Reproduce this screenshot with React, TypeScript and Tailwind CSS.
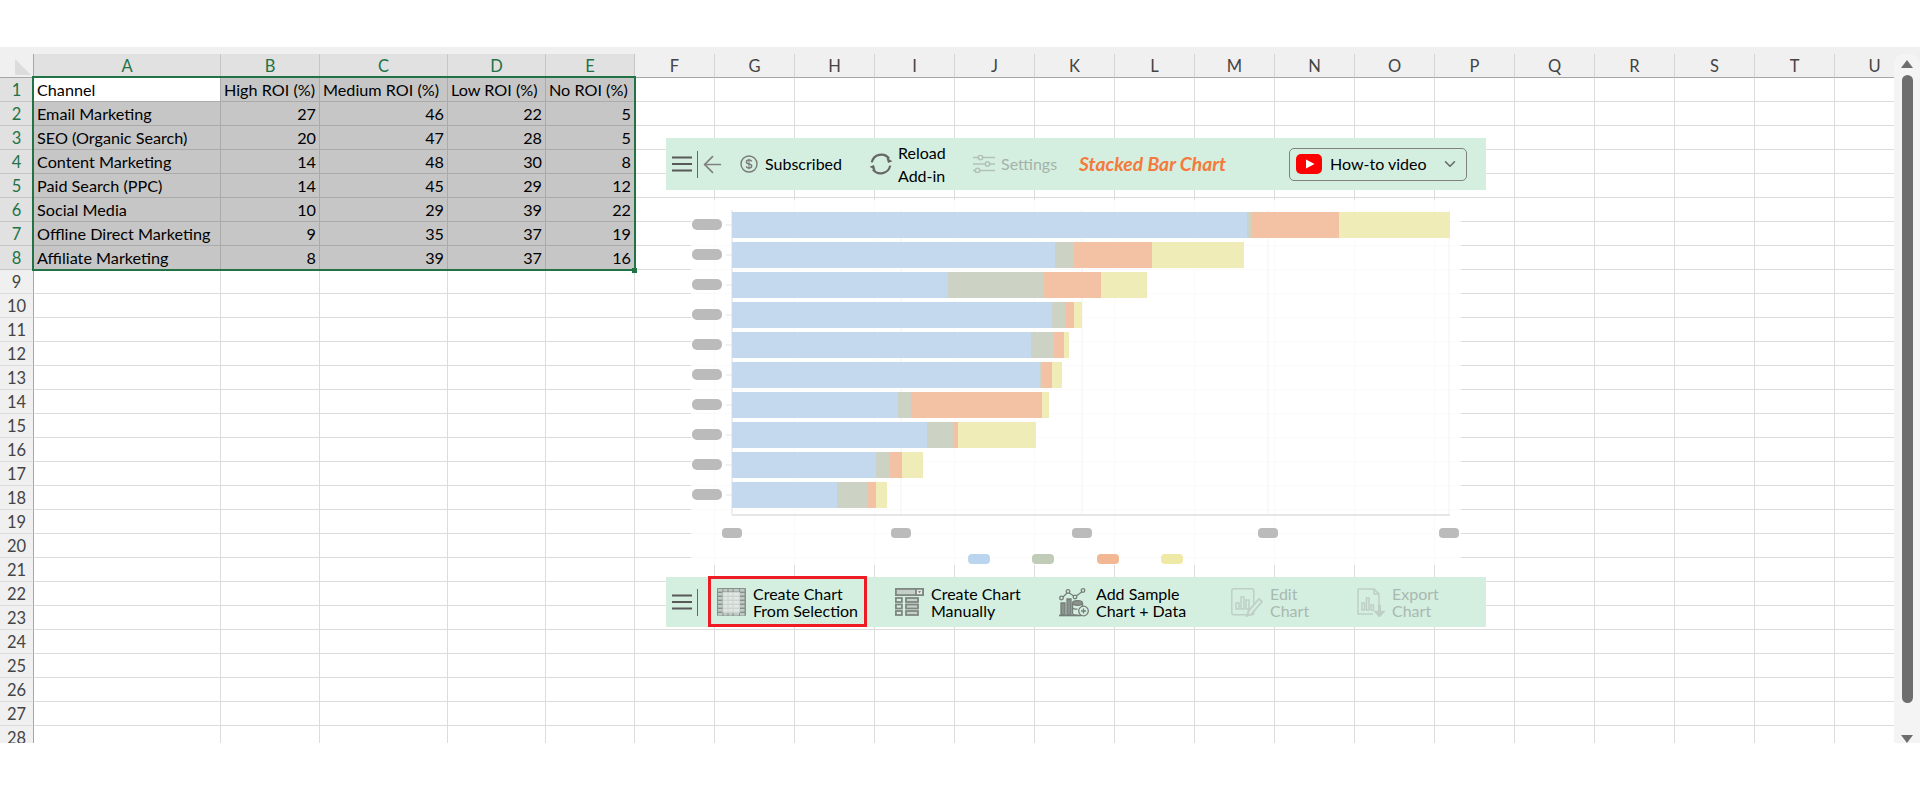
import { ArrowLeft, ChevronDown } from "lucide-react";

const columns = ["A", "B", "C", "D", "E", "F", "G", "H", "I", "J", "K", "L", "M", "N", "O", "P", "Q", "R", "S", "T", "U"];
const selectedColumns = ["A", "B", "C", "D", "E"];

const tableRows = [
  ["Channel", "High ROI (%)", "Medium ROI (%)", "Low ROI (%)", "No ROI (%)"],
  ["Email Marketing", "27", "46", "22", "5"],
  ["SEO (Organic Search)", "20", "47", "28", "5"],
  ["Content Marketing", "14", "48", "30", "8"],
  ["Paid Search (PPC)", "14", "45", "29", "12"],
  ["Social Media", "10", "29", "39", "22"],
  ["Offline Direct Marketing", "9", "35", "37", "19"],
  ["Affiliate Marketing", "8", "39", "37", "16"],
];

// x stops of each stacked bar: blue, grey, orange, yellow
const bars = [
  [1247, 1251, 1339, 1450],
  [1055, 1074, 1152, 1244],
  [948, 1044, 1101, 1147],
  [1052, 1066, 1074, 1082],
  [1031, 1054, 1064, 1069],
  [1040, 1042, 1052, 1062],
  [898, 911, 1042, 1049],
  [927, 953, 958, 1036],
  [876, 890, 902, 923],
  [837, 868, 876, 887],
];
const barColors = ["#c5d9ee", "#ccd3c5", "#f3c2a5", "#efecb8"];
const xTicks = [732, 901, 1082, 1268, 1449];
const legend = [
  { x: 968, color: "#bcd5ee" },
  { x: 1032, color: "#c0cbb8" },
  { x: 1097, color: "#f2b894" },
  { x: 1161, color: "#efe9a6" },
];

function Hamburger() {
  return (
    <svg width="20" height="16" viewBox="0 0 20 16" stroke="#595959" strokeWidth="2.200">
      <path d="M0 1.500h20M0 8h20M0 14.500h20" />
    </svg>
  );
}

function ChartArea() {
  return (
    <svg viewBox="666 190 820 387" className="block h-[387px] w-[820px]">
      <defs>
        <filter id="soft" x="-20%" y="-20%" width="140%" height="140%">
          <feGaussianBlur stdDeviation="0.7" />
        </filter>
      </defs>
      <rect x="691" y="200" width="770" height="365" fill="#fff" opacity="0.86" />
      {xTicks.map((x) => (
        <line key={x} x1={x} x2={x} y1="210" y2="515" stroke="#f3f3f3" />
      ))}
      <line x1="732" x2="732" y1="210" y2="515" stroke="#e4e4e4" />
      <line x1="732" x2="1450" y1="515" y2="515" stroke="#e6e6e6" strokeWidth="2" />
      {bars.map((stops, i) => {
        const y = 212 + i * 30;
        return (
          <g key={i}>
            <rect x="692" y={y + 7} width="30" height="11" rx="5" fill="#bbbbbb" filter="url(#soft)" />
            <line x1="726" x2="732" y1={y + 13} y2={y + 13} stroke="#e4e4e4" />
            {stops.map((end, j) => {
              const start = j === 0 ? 732 : stops[j - 1];
              return <rect key={j} x={start} y={y} width={end - start} height="26" fill={barColors[j]} />;
            })}
          </g>
        );
      })}
      {xTicks.map((x) => (
        <rect key={x} x={x - 10} y="528" width="20" height="10" rx="4" fill="#bbbbbb" filter="url(#soft)" />
      ))}
      {legend.map((item) => (
        <rect key={item.x} x={item.x} y="554" width="22" height="10" rx="4" fill={item.color} filter="url(#soft)" />
      ))}
    </svg>
  );
}

function ReloadIcon() {
  return (
    <svg width="26" height="26" viewBox="0 0 24 24" fill="none" stroke="#666" strokeWidth="2">
      <path d="M3.500 10.500A9 9 0 0 1 19.500 7" />
      <path d="M20.500 13.500A9 9 0 0 1 4.500 17" />
      <path d="M22.500 9.500 18.500 11 17 6z" fill="#666" stroke="none" />
      <path d="M1.500 14.500 5.500 13 7 18z" fill="#666" stroke="none" />
    </svg>
  );
}

function SubscribedIcon() {
  return (
    <svg width="18" height="18" viewBox="0 0 18 18" fill="none" stroke="#7a7a7a" strokeWidth="1.400">
      <circle cx="9" cy="9" r="8" />
      <path d="M11.800 6.400C11.200 5.300 10.200 5 9 5 7.500 5 6.400 5.800 6.400 7s1 1.700 2.600 2c1.700.3 2.700.9 2.700 2.100S10.500 13 9 13c-1.300 0-2.400-.5-2.900-1.600" />
      <path d="M9 3.800V14.200" strokeWidth="1" />
    </svg>
  );
}

function SettingsIcon() {
  return (
    <svg width="22" height="18" viewBox="0 0 22 18" fill="none" stroke="#b3c1b9" strokeWidth="1.500">
      <path d="M0 2.500h5M10 2.500h12M0 9h12M17 9h5M0 15.500h2M7 15.500h15" />
      <circle cx="7.500" cy="2.500" r="2.200" />
      <circle cx="14.500" cy="9" r="2.200" />
      <circle cx="4.500" cy="15.500" r="2.200" />
    </svg>
  );
}

function YoutubeIcon() {
  return (
    <svg width="26" height="20" viewBox="0 0 26 20">
      <rect width="26" height="20" rx="5" fill="#ff0000" />
      <path d="M10 5.500 18.500 10 10 14.500z" fill="#fff" />
    </svg>
  );
}

function TableIcon() {
  const cols = [1, 6.500, 11.500, 16.500, 23];
  const widths = [4.500, 4, 4, 5.500, 4.500];
  const rows = [1, 5, 9, 13, 17, 21, 25];
  return (
    <svg width="29" height="28" viewBox="0 0 29 28">
      <rect width="29" height="28" rx="1" fill="#87918b" />
      <rect x="5.500" y="4" width="17.500" height="21" fill="#ccd4cf" />
      {cols.map((x, c) =>
        rows.map((y, r) => {
          const light = c > 0 && c < 4 && r > 0 && r < 6;
          return <rect key={`${x}-${y}`} x={x} y={y} width={widths[c]} height="2.600" fill={light ? "#e2e7e4" : "#bfcbc4"} />;
        }),
      )}
    </svg>
  );
}

function FormIcon() {
  return (
    <svg width="29" height="28" viewBox="0 0 29 28" fill="none" stroke="#7f8780" strokeWidth="1.800">
      <rect x="0.900" y="0.900" width="27.200" height="6.200" fill="#c4cfc8" />
      <rect x="21" y="0.900" width="7" height="6.200" fill="#e6ebe8" />
      <path d="M23 3.300h3l-1.500 1.700z" fill="#666" stroke="none" />
      <rect x="0.900" y="10" width="6" height="4" />
      <rect x="11" y="10" width="12" height="4" fill="#c4cfc8" />
      <rect x="0.900" y="16.500" width="6" height="4" />
      <rect x="11" y="16.500" width="12" height="4" fill="#c4cfc8" />
      <rect x="0.900" y="23" width="6" height="4" />
      <rect x="11" y="23" width="12" height="4" fill="#c4cfc8" />
    </svg>
  );
}

function SampleIcon() {
  return (
    <svg width="30" height="30" viewBox="0 0 30 30" fill="none" stroke="#767d78" strokeWidth="1.300">
      <path d="M3 11 9 5l7 5 8-6" />
      <circle cx="2.500" cy="11" r="1.800" fill="#d4efe0" />
      <circle cx="9" cy="4.500" r="1.800" fill="#d4efe0" />
      <circle cx="16" cy="10" r="1.800" fill="#d4efe0" />
      <circle cx="24" cy="3.500" r="1.800" fill="#d4efe0" />
      <path d="M2 16h4v12H2zM8 12h4v16H8z" fill="#8b938e" />
      <ellipse cx="18.500" cy="16" rx="5" ry="2.300" fill="#8b938e" />
      <path d="M13.500 16v10c0 1.300 2.200 2.200 5 2.200M13.500 20c0 1.300 2.200 2.200 5 2.200M23.500 16v4" />
      <path d="M0 28.500h22" strokeWidth="1.600" />
      <circle cx="24.500" cy="24" r="4.800" fill="#d4efe0" />
      <path d="M24.500 21.500v5M22 24h5" />
    </svg>
  );
}

function EditIcon() {
  return (
    <svg width="32" height="29" viewBox="0 0 32 29" fill="none" stroke="#bfcfc6" strokeWidth="1.500">
      <rect x="0.800" y="0.800" width="22" height="26" rx="2" />
      <path d="M5 21v-6h3v6zM10 21V9h3v12zM15 21v-9h3v9z" />
      <path d="m16 28 1.500-5L28 11l3 2.500L20.500 26z" fill="#d4efe0" strokeWidth="1.800" />
    </svg>
  );
}

function ExportIcon() {
  return (
    <svg width="28" height="29" viewBox="0 0 28 29" fill="none" stroke="#bfcfc6" strokeWidth="1.500">
      <path d="M1 1h16l5 5v11M1 1v25h15" />
      <path d="M17 1v5h5" />
      <path d="M5 22V15h2.500v7zM9.500 22V10H12v12zM14 22v-5h2.500v5z" />
      <path d="M22.500 17v8" strokeWidth="3" />
      <path d="m18 23.500 4.500 5 4.500-5z" fill="#bfcfc6" />
    </svg>
  );
}

export default function App() {
  return (
    <div className="min-h-[790px] bg-white pt-[47px] font-['Lato',sans-serif]">
      <div className="relative flex h-[696px] overflow-hidden">
        {/* Sheet */}
        <div className="w-[1894px] shrink-0 overflow-hidden">
          <div className="h-[7px] bg-[#f0f0f0]" />
          <div className="grid w-[1887px] grid-cols-[34px_187px_99px_128px_98px_89px_repeat(16,80px)] auto-rows-[24px] text-[16.200px] leading-[23px] text-black">
            <div className="relative border-r border-b border-[#a6a6a6] bg-[#f0f0f0]">
              <div className="absolute right-[2px] bottom-[2px] h-0 w-0 border-t-[16px] border-l-[16px] border-t-transparent border-l-[#dcdcdc]" />
            </div>
            {columns.map((col) => {
              const selected = selectedColumns.includes(col);
              return (
                <div
                  key={col}
                  className={
                    selected
                      ? "border-r border-b border-r-[#c6c6c6] border-b-[#a6a6a6] bg-[#e1e1e1] pt-px text-center text-[16.500px] text-[#217346]"
                      : "border-r border-b border-r-[#d4d4d4] border-b-[#a6a6a6] bg-[#f0f0f0] pt-px text-center text-[16.500px] text-[#444]"
                  }
                >
                  {col}
                </div>
              );
            })}
            {Array.from({ length: 28 }, (_, rowIndex) => {
              const data = tableRows[rowIndex];
              return (
                <div key={rowIndex} className="contents">
                  <div
                    className={
                      data
                        ? "border-r border-b border-r-[#a6a6a6] border-b-[#c6c6c6] bg-[#e1e1e1] pt-px text-center text-[16.500px] text-[#217346]"
                        : "border-r border-b border-r-[#a6a6a6] border-b-[#dcdcdc] bg-[#f0f0f0] pt-px text-center text-[16.500px] text-[#444]"
                    }
                  >
                    {rowIndex + 1}
                  </div>
                  {columns.map((col, colIndex) => {
                    const value = data ? data[colIndex] : undefined;
                    if (value === undefined) {
                      return <div key={col} className="border-r border-b border-[#dcdcdc]" />;
                    }
                    const active = rowIndex === 0 && colIndex === 0;
                    const alignRight = rowIndex > 0 && colIndex > 0;
                    return (
                      <div
                        key={col}
                        className={`overflow-visible whitespace-nowrap border-r border-b px-[3px] ${
                          active ? "border-r-[#ababab] border-b-[#ababab] bg-white" : "border-[#ababab] bg-[#c6c6c6]"
                        } ${alignRight ? "text-right" : "text-left"}`}
                      >
                        {value}
                      </div>
                    );
                  })}
                </div>
              );
            })}
          </div>
        </div>

        {/* Scrollbar */}
        <div className="flex w-[26px] shrink-0 flex-col bg-[#f0f0f0] pt-[7px]">
          <div className="flex flex-1 flex-col items-center rounded-t-[10px] bg-[#f4f4f4] pt-[6px]">
            <div className="h-0 w-0 border-x-[6px] border-b-[8px] border-x-transparent border-b-[#6e6e6e]" />
            <div className="mt-[7px] h-[628px] w-[11px] rounded-full bg-[#6e6e6e]" />
            <div className="mt-[32px] h-0 w-0 border-x-[6px] border-t-[8px] border-x-transparent border-t-[#6e6e6e]" />
          </div>
        </div>

        {/* Selection */}
        <div className="absolute top-[29px] left-[32px] h-[195px] w-[604px] border-2 border-[#217346]" />
        <div className="absolute top-[221px] left-[632px] h-[5px] w-[5px] bg-[#217346]" />

        {/* Add-in pane */}
        <div className="absolute top-[91px] left-[666px] w-[820px] text-[16px] text-black">
          <div className="flex h-[52px] items-center bg-[#d4efe0] pl-[6px]">
            <Hamburger />
            <div className="ml-[5px] h-[27px] w-px bg-[#666]" />
            <ArrowLeft className="ml-px h-[27px] w-[27px] text-[#808080]" strokeWidth={1.500} />
            <div className="ml-[14px]">
              <SubscribedIcon />
            </div>
            <span className="ml-[7px] w-[103px]">Subscribed</span>
            <ReloadIcon />
            <div className="ml-[4px] flex w-[75px] flex-col leading-[23px]">
              <span>Reload</span>
              <span>Add-in</span>
            </div>
            <SettingsIcon />
            <span className="ml-[6px] w-[78px] text-[#a4b2aa]">Settings</span>
            <span className="w-[211px] text-[19.300px] font-bold text-[#f47a3c] italic">Stacked Bar Chart</span>
            <div className="-ml-px flex h-[33px] w-[178px] items-center rounded-[5px] border border-[#808080] pr-[7px] pl-[6px]">
              <YoutubeIcon />
              <span className="ml-[8px] flex-1">How-to video</span>
              <ChevronDown className="h-[18px] w-[18px] text-[#666]" strokeWidth={2} />
            </div>
          </div>

          <ChartArea />

          <div className="relative flex h-[50px] items-center bg-[#d4efe0] pl-[6px] leading-[17px]">
            <Hamburger />
            <div className="ml-[5px] h-[27px] w-px bg-[#666]" />
            <div className="ml-[19px]">
              <TableIcon />
            </div>
            <div className="ml-[7px] flex w-[142px] flex-col">
              <span>Create Chart</span>
              <span>From Selection</span>
            </div>
            <FormIcon />
            <div className="ml-[7px] flex w-[128px] flex-col">
              <span>Create Chart</span>
              <span>Manually</span>
            </div>
            <SampleIcon />
            <div className="ml-[7px] flex w-[135px] flex-col">
              <span>Add Sample</span>
              <span>Chart + Data</span>
            </div>
            <EditIcon />
            <div className="ml-[7px] flex w-[87px] flex-col text-[#a9b8b0]">
              <span>Edit</span>
              <span>Chart</span>
            </div>
            <ExportIcon />
            <div className="ml-[7px] flex flex-col text-[#a9b8b0]">
              <span>Export</span>
              <span>Chart</span>
            </div>
            <div className="absolute -top-px left-[42px] h-[51px] w-[159px] border-[3px] border-[#ed1c24]" />
          </div>
        </div>
      </div>
    </div>
  );
}
